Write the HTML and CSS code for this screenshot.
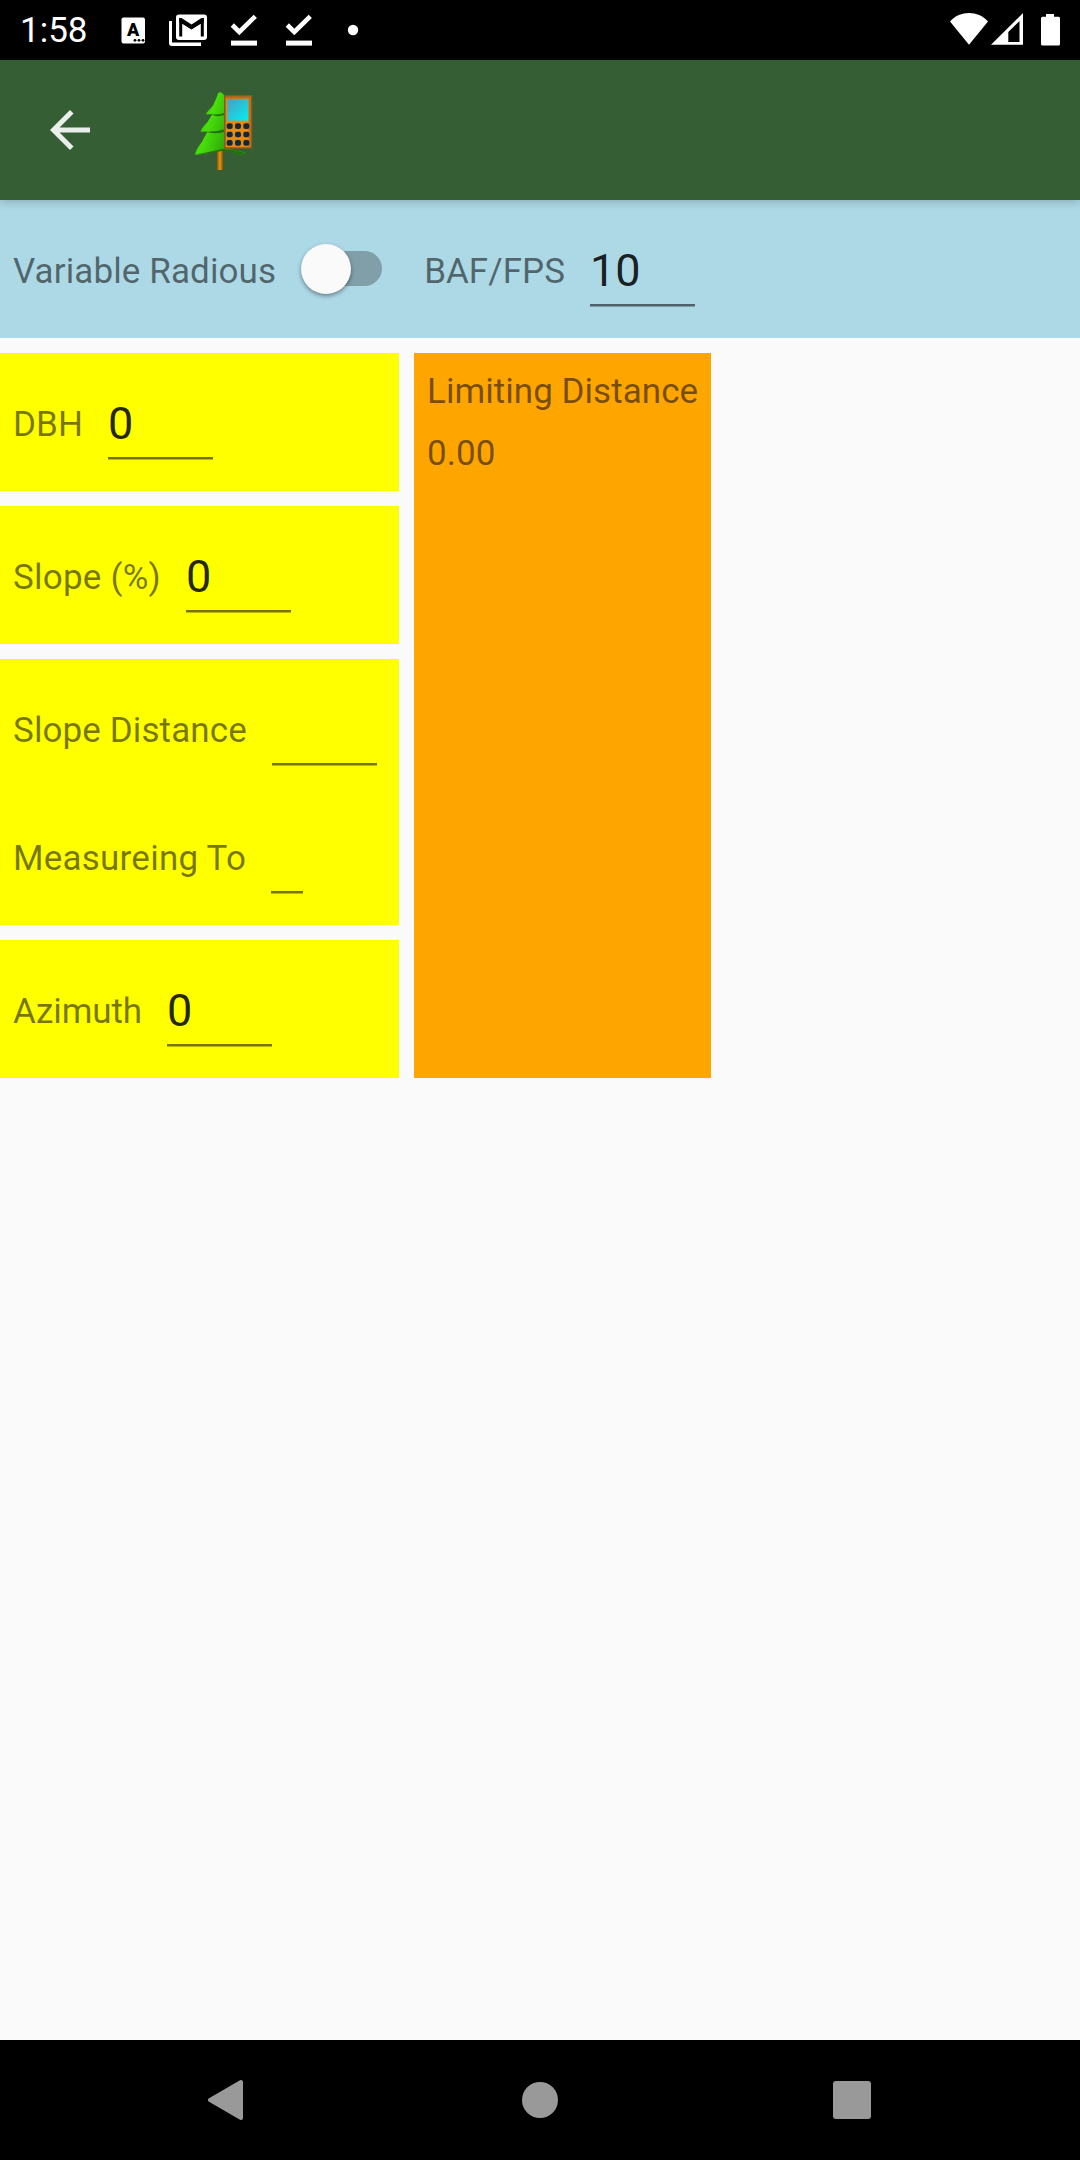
FILE: index.html
```html
<!DOCTYPE html>
<html lang="en">
<head>
<meta charset="utf-8">
<title>Limiting Distance</title>
<link rel="stylesheet" href="styles.css">
</head>
<body>
<div class="screen">
  <div class="status">
    <span class="clock">1:58</span>
    <svg class="notifications" width="250" height="60" viewBox="115 0 250 60" fill="#fff">
      <rect x="121.5" y="17.5" width="23.5" height="26" rx="2"/>
      <text class="badge-letter" x="133.2" y="36" text-anchor="middle">A</text>
      <g fill="#000"><circle cx="135" cy="40.3" r="1.4"/><circle cx="139" cy="40.3" r="1.4"/><circle cx="143" cy="40.3" r="1.4"/></g>
      <path d="M169 21h3v21.500h29V46H172q-3 0-3-3z"/>
      <rect x="176" y="14.500" width="31" height="25.500" rx="3"/>
      <path d="M180.700 36.500V20.500L191.500 27.600L202.300 20.500V36.500" fill="none" stroke="#000" stroke-width="3"/>
      <path d="M179.200 18.200L181.500 18L191.500 24.500L201.500 18L203.800 18.200V22L191.500 29.300L179.200 22z" fill="#000"/>
      <g id="done"><path d="M232.300 25L239.300 32L255.300 16.300" fill="none" stroke="#fff" stroke-width="4.600"/><rect x="231" y="40.600" width="26" height="5"/></g>
      <use href="#done" x="55"/>
      <circle cx="353" cy="30" r="5.200"/>
    </svg>
    <svg class="system" width="130" height="60" viewBox="940 0 130 60" fill="#fff">
      <path d="M950 21.500C960 10.200 978 10.200 988 21.500L969 44.700z"/>
      <path fill-rule="evenodd" d="M991 44.700L1023 13V44.700zM1008.300 42h11.200V21L1008.300 32z"/>
      <path d="M1046 14h8v2.800h4.500q1.500 0 1.500 1.500v25.700q0 1.500-1.500 1.500h-16q-1.500 0-1.500-1.500V18.300q0-1.500 1.500-1.500h3.500z"/>
    </svg>
  </div>

  <header class="appbar">
    <svg class="back" width="60" height="60" viewBox="0 0 24 24"><path fill="#ebefeb" d="M20 11H7.830l5.590-5.590L12 4l-8 8 8 8 1.410-1.410L7.830 13H20v-2z"/></svg>
    <svg class="logo" width="90" height="100" viewBox="0 0 270 300">
      <defs>
        <linearGradient id="leaf" x1="0" x2="1" y1="0" y2=".4"><stop offset="0" stop-color="#2fa508"/><stop offset=".4" stop-color="#48df0b"/><stop offset="1" stop-color="#259006"/></linearGradient>
        <linearGradient id="trunk"><stop offset="0" stop-color="#8b5705"/><stop offset=".5" stop-color="#e99510"/><stop offset="1" stop-color="#805008"/></linearGradient>
        <linearGradient id="lcd" x1="0" x2=".8" y1="0" y2="1"><stop offset="0" stop-color="#4a9fc0"/><stop offset="1" stop-color="#08e8ee"/></linearGradient>
      </defs>
      <rect x="111" y="205" width="18" height="65" fill="url(#trunk)"/>
      <path d="M120 36Q128 38 136 50V205L196 216Q195 227 180 225Q155 214 128 210Q85 222 46 224Q43 215 66 185L82 155L62 155Q62 147 82 127L97 103L77 103Q80 97 98 78Q110 55 114 40z" fill="url(#leaf)"/>
      <path d="M80 102Q110 107 135 98L135 105Q110 112 98 105zM64 154Q100 159 135 147L135 155Q105 164 82 156zM48 223Q85 217 128 207Q165 210 194 220Q188 227 170 221Q145 213 128 212Q90 222 48 223z" fill="#23710c"/>
      <path d="M132 45H217V206H132z" fill="#8a5a1c"/>
      <path d="M137 50H212V202H137z" fill="#e48b16"/>
      <path d="M137 50H212V202H206V56H137z" fill="#b87020"/>
      <rect x="142" y="58" width="63" height="64" fill="url(#lcd)"/>
      <g fill="#182634"><rect x="140" y="130" width="18" height="17" rx="6"/><rect x="165" y="130" width="18" height="17" rx="6"/><rect x="190" y="130" width="18" height="17" rx="6"/><rect x="140" y="155" width="18" height="17" rx="6"/><rect x="165" y="155" width="18" height="17" rx="6"/><rect x="190" y="155" width="18" height="17" rx="6"/><rect x="140" y="180" width="18" height="17" rx="6"/><rect x="165" y="180" width="18" height="17" rx="6"/><rect x="190" y="180" width="18" height="17" rx="6"/></g>
    </svg>
  </header>

  <main class="content">
    <section class="panel panel-blue">
      <div class="row">
        <span class="label label-roomy">Variable Radious</span>
        <span class="switch"><span class="thumb"></span></span>
        <span class="label">BAF/FPS</span>
        <input class="field" value="10" aria-label="BAF/FPS">
      </div>
    </section>
    <div class="columns">
      <div class="inputs">
        <section class="panel"><div class="row"><span class="label label-roomy">DBH</span><input class="field" value="0" aria-label="DBH"></div></section>
        <section class="panel"><div class="row"><span class="label label-wide">Slope (%)</span><input class="field" value="0" aria-label="Slope"></div></section>
        <section class="panel">
          <div class="row"><span class="label label-roomy">Slope Distance</span><input class="field" aria-label="Slope Distance"></div>
          <div class="row"><span class="label label-wide">Measureing To</span><input class="field field-short" aria-label="Measureing To"></div>
        </section>
        <section class="panel"><div class="row"><span class="label label-tight">Azimuth</span><input class="field" value="0" aria-label="Azimuth"></div></section>
      </div>
      <section class="result">
        <span class="label">Limiting Distance</span>
        <span class="label">0.00</span>
      </section>
    </div>
  </main>

  <nav class="navbar">
    <svg width="40" height="44" viewBox="0 0 40 44"><path d="M2 22L33 4V40z" fill="#999" stroke="#999" stroke-width="4" stroke-linejoin="round"/></svg>
    <svg width="40" height="44" viewBox="0 0 40 44"><circle cx="20" cy="22" r="18" fill="#999"/></svg>
    <svg width="40" height="44" viewBox="0 0 40 44"><rect x="1" y="3" width="38" height="38" rx="3" fill="#999"/></svg>
  </nav>
</div>
</body>
</html>
```
FILE: styles.css
```css
* { box-sizing: border-box; }

body {
  margin: 0;
  background: #fafafa;
  font-family: Roboto, "Noto Sans", sans-serif;
}

.screen {
  width: 1080px;
  height: 2160px;
  display: flex;
  flex-direction: column;
  overflow: hidden;
}

.status {
  height: 60px;
  flex: none;
  display: flex;
  align-items: center;
  padding: 0 10px 0 20px;
  background: #000;
  color: #fff;
}

.clock { width: 95px; padding-top: 2px; font-size: 35px; line-height: 60px; }
.system { margin-left: auto; }
.badge-letter { font: 900 18px Roboto, sans-serif; fill: #000; }

.appbar {
  height: 140px;
  flex: none;
  display: flex;
  align-items: center;
  padding-left: 40px;
  gap: 80px;
  background: #355e35;
  box-shadow: 0 2px 9px rgba(0, 0, 0, .2);
  z-index: 1;
}

.logo { filter: blur(.5px); }

.content {
  flex: 1;
  display: flex;
  flex-direction: column;
  gap: 15px;
}

.panel { padding: 5px 0; background: #ff0; }
.panel-blue { background: #add8e6; }

.row { height: 128px; display: flex; align-items: flex-start; }

.label {
  padding: 46px 13px 0;
  font-size: 35px;
  line-height: 41px;
  letter-spacing: .04px;
  color: rgba(0, 0, 0, .54);
  white-space: nowrap;
}

.label-roomy { letter-spacing: .1px; }
.label-wide { letter-spacing: .22px; }
.label-tight { letter-spacing: -.09px; }

.field {
  width: 105px;
  height: 64px;
  margin: 38px 0 0 12px;
  padding: 0 0 10px;
  border: 0;
  outline: 0;
  border-radius: 0;
  background: linear-gradient(rgba(0, 0, 0, .54) 2px, rgba(0, 0, 0, .27) 2px) bottom / 100% 3px no-repeat;
  font: 45px Roboto, "Noto Sans", sans-serif;
  color: rgba(0, 0, 0, .87);
}

.field-short { width: 32px; }

.switch {
  width: 71px;
  height: 35px;
  margin: 46px 29px 0 22px;
  border-radius: 18px;
  background: #819fa9;
}

.thumb {
  display: block;
  width: 50px;
  height: 50px;
  margin: -7px 0 0 -10px;
  border-radius: 50%;
  background: #fafafa;
  box-shadow: 0 2px 4px rgba(0, 0, 0, .4);
}

.columns { display: flex; gap: 15px; }
.inputs { width: 399px; display: flex; flex-direction: column; gap: 15px; }

.result {
  width: 297px;
  display: flex;
  flex-direction: column;
  gap: 21px;
  padding-top: 18px;
  background: #ffa500;
}

.result .label { padding-top: 0; }

.navbar {
  height: 120px;
  flex: none;
  display: flex;
  justify-content: space-between;
  align-items: center;
  padding: 0 208px;
  background: #000;
}
```
